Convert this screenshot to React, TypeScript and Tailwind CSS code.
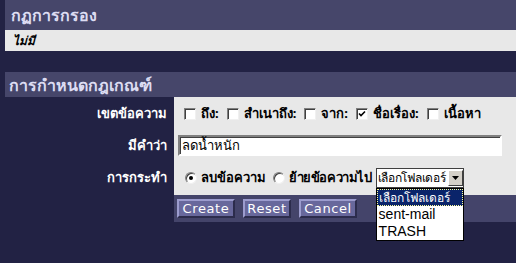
import React from 'react';

const Check = ({ checked }: { checked?: boolean }) => (
  <span className="inline-flex h-[12px] w-[12px] items-center justify-center border border-t-[#808080] border-l-[#808080] border-r-[#f0f0f0] border-b-[#f0f0f0] bg-white shadow-[inset_1px_1px_0_#404040]">
    {checked && (
      <svg width="8" height="8" viewBox="0 0 8 8">
        <path d="M1 3.5 L3 5.5 L7 1.5" stroke="#000" strokeWidth="1.6" fill="none" />
      </svg>
    )}
  </span>
);

const Radio = ({ checked }: { checked?: boolean }) => (
  <span className="inline-flex h-[12px] w-[12px] items-center justify-center rounded-full border border-t-[#808080] border-l-[#808080] border-r-[#f0f0f0] border-b-[#f0f0f0] bg-white shadow-[inset_1px_1px_0_#404040]">
    {checked && <span className="h-[4px] w-[4px] rounded-full bg-black" />}
  </span>
);

const Btn = ({ label, w }: { label: string; w: string }) => (
  <button
    className={`${w} h-[19px] border-2 border-t-[#9c9cce] border-l-[#9c9cce] border-r-[#2c2c4c] border-b-[#2c2c4c] bg-[#68689c] text-[13px] leading-none tracking-[0.6px] text-white`}
  >
    {label}
  </button>
);

export default function App() {
  const thai = "font-['Noto_Sans','DejaVu_Sans',sans-serif]";
  return (
    <div className={`min-h-screen bg-[#222244] pl-[5px] ${thai}`}>
      <div className="flex h-[30px] items-center bg-[#46466a] pl-[6px] text-[16px] font-bold text-[#dcdcf2]">
        กฏการกรอง
      </div>
      <div className="flex h-[21px] items-center bg-[#e8e8e8] pl-[8px] text-[12px] font-bold italic text-black">
        ไม่มี
      </div>
      <div className="h-[21px]" />
      <div className="flex h-[25px] items-center bg-[#46466a] pl-[4px] text-[16px] font-bold text-[#dcdcf2]">
        การกำหนดกฎเกณฑ์
      </div>

      <div className="grid grid-cols-[169px_1fr] text-[13px] font-bold">
        <div className="flex h-[33px] items-center justify-end pr-[7px] text-white">เขตข้อความ</div>
        <div className="flex h-[33px] items-center gap-[5px] bg-[#e8e8e8] pl-[10px] text-black">
          <Check /> <span className="mr-[3px]">ถึง:</span>
          <Check /> <span className="mr-[3px]">สำเนาถึง:</span>
          <Check /> <span className="mr-[3px]">จาก:</span>
          <Check checked /> <span className="mr-[3px]">ชื่อเรื่อง:</span>
          <Check /> <span>เนื้อหา</span>
        </div>

        <div className="flex h-[31px] items-center justify-end pr-[7px] text-white">มีคำว่า</div>
        <div className="flex h-[31px] items-center bg-[#e8e8e8] pl-[4px]">
          <div className="flex h-[21px] w-[324px] items-center border-2 border-t-[#808080] border-l-[#808080] border-r-[#ffffff] border-b-[#ffffff] bg-white pl-[2px] text-[13px] font-normal text-black shadow-[inset_1px_1px_0_#404040]">
            ลดน้ำหนัก
          </div>
        </div>

        <div className="flex h-[34px] items-center justify-end pr-[7px] text-white">การกระทำ</div>
        <div className="relative flex h-[34px] items-center whitespace-nowrap bg-[#e8e8e8] pl-[11px] text-black">
          <Radio checked />
          <span className="ml-[4px] mr-[7px]">ลบข้อความ</span>
          <Radio />
          <span className="ml-[4px] mr-[4px] tracking-[-0.4px]">ย้ายข้อความไป</span>
          <div className="relative">
            <div className="flex h-[20px] w-[88px] items-center overflow-hidden border border-[#404040] bg-white text-[12px] font-normal">
              <span className="flex-1 overflow-hidden pl-[1px] tracking-[-0.3px]">เลือกโฟลเดอร์</span>
              <span className="flex h-[16px] w-[15px] shrink-0 items-center justify-center border border-t-[#ffffff] border-l-[#ffffff] border-r-[#404040] border-b-[#404040] bg-[#d4d0c8]">
                <svg width="7" height="4" viewBox="0 0 7 4">
                  <path d="M0 0 H7 L3.5 4 Z" fill="#000" />
                </svg>
              </span>
            </div>
            <div className="absolute left-0 top-[20px] z-10 w-[88px] border border-black bg-white font-['Liberation_Sans',sans-serif] text-[14px] font-normal leading-[17px] text-black">
              <div className={`border border-dotted border-[#ffff99] bg-[#0a246a] pl-[1px] text-[12px] leading-[15px] text-white ${thai}`}>เลือกโฟลเดอร์</div>
              <div className="pl-[2px]">sent-mail</div>
              <div className="pl-[2px]">TRASH</div>
            </div>
          </div>
        </div>

        <div className="h-[27px]" />
        <div className="flex h-[27px] items-center gap-[8px] bg-[#44446a] pl-[3px] font-['DejaVu_Sans',sans-serif] font-normal">
          <Btn label="Create" w="w-[58px]" />
          <Btn label="Reset" w="w-[48px]" />
          <Btn label="Cancel" w="w-[58px]" />
        </div>
      </div>
    </div>
  );
}
